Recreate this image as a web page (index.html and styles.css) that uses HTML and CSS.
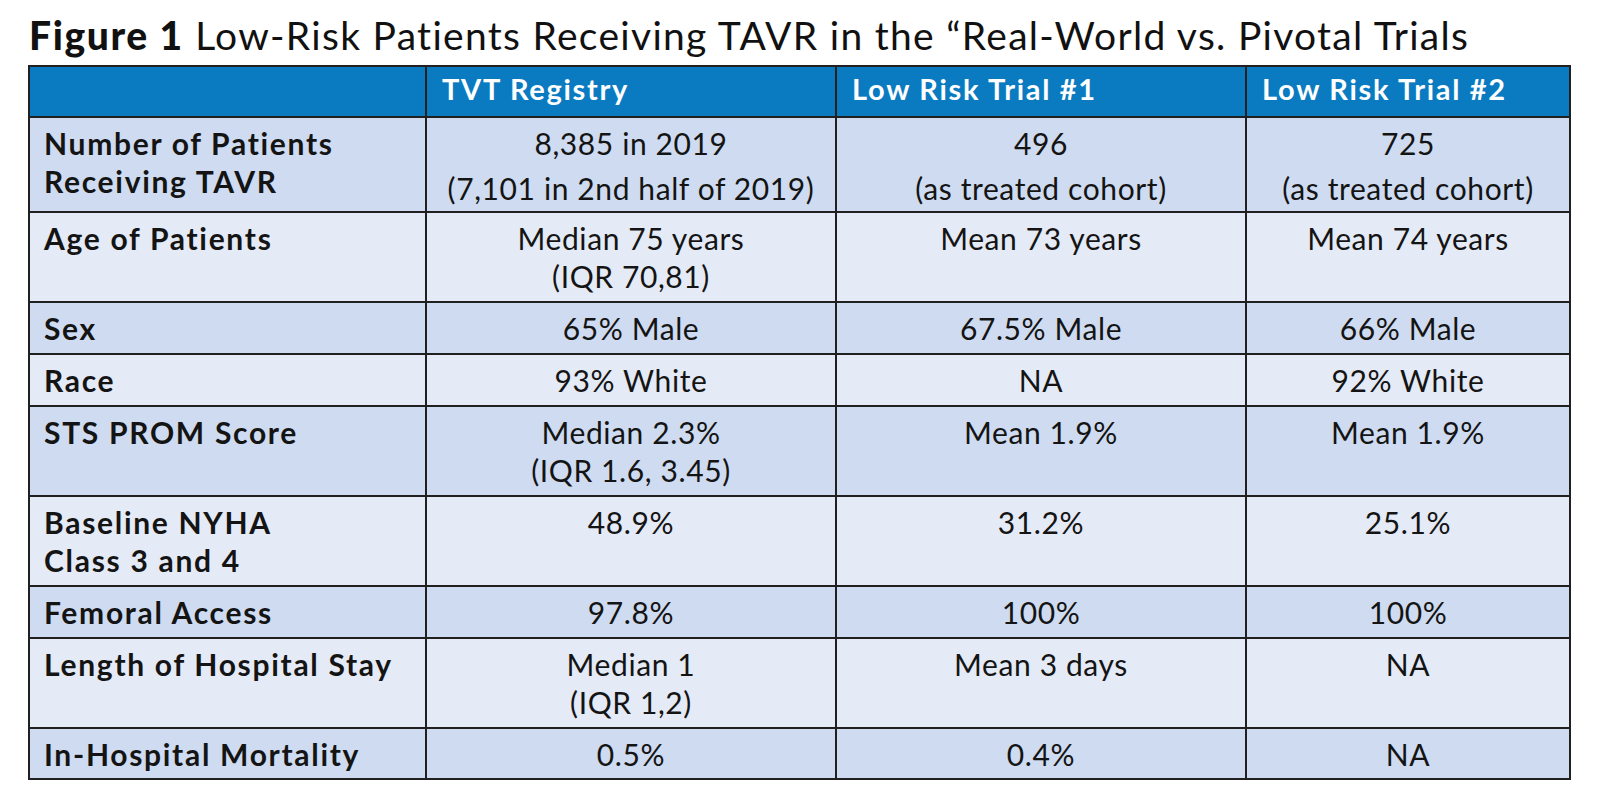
FILE: index.html
```html
<!DOCTYPE html>
<html lang="en">
<head>
<meta charset="utf-8">
<title>Figure 1</title>
<link rel="stylesheet" href="styles.css">
</head>
<body>
<div class="page">
  <h1 class="title"><span class="fig">Figure 1</span> Low-Risk Patients Receiving TAVR in the “Real-World vs. Pivotal Trials</h1>
  <table class="grid">
    <colgroup>
      <col class="c-label">
      <col class="c-tvt">
      <col class="c-t1">
      <col class="c-t2">
    </colgroup>
    <thead>
      <tr class="head">
        <th></th>
        <th>TVT Registry</th>
        <th>Low Risk Trial #1</th>
        <th>Low Risk Trial #2</th>
      </tr>
    </thead>
    <tbody>
      <tr class="dark first">
        <th>Number of Patients<br>Receiving TAVR</th>
        <td><span class="l1">8,385 in 2019</span><span class="l2">(7,101 in 2nd half of 2019)</span></td>
        <td><span class="l1">496</span><span class="l2">(as treated cohort)</span></td>
        <td><span class="l1">725</span><span class="l2">(as treated cohort)</span></td>
      </tr>
      <tr class="light">
        <th>Age of Patients</th>
        <td>Median 75 years<br>(IQR 70,81)</td>
        <td>Mean 73 years</td>
        <td>Mean 74 years</td>
      </tr>
      <tr class="dark">
        <th>Sex</th>
        <td>65% Male</td>
        <td>67.5% Male</td>
        <td>66% Male</td>
      </tr>
      <tr class="light">
        <th>Race</th>
        <td>93% White</td>
        <td>NA</td>
        <td>92% White</td>
      </tr>
      <tr class="dark">
        <th>STS PROM Score</th>
        <td>Median 2.3%<br>(IQR 1.6, 3.45)</td>
        <td>Mean 1.9%</td>
        <td>Mean 1.9%</td>
      </tr>
      <tr class="light">
        <th>Baseline NYHA<br>Class 3 and 4</th>
        <td>48.9%</td>
        <td>31.2%</td>
        <td>25.1%</td>
      </tr>
      <tr class="dark">
        <th>Femoral Access</th>
        <td>97.8%</td>
        <td>100%</td>
        <td>100%</td>
      </tr>
      <tr class="light">
        <th>Length of Hospital Stay</th>
        <td>Median 1<br>(IQR 1,2)</td>
        <td>Mean 3 days</td>
        <td>NA</td>
      </tr>
      <tr class="dark last">
        <th>In-Hospital Mortality</th>
        <td>0.5%</td>
        <td>0.4%</td>
        <td>NA</td>
      </tr>
    </tbody>
  </table>
</div>
</body>
</html>
```

FILE: styles.css
```css
html, body {
  margin: 0;
  padding: 0;
  background: #ffffff;
}

.page {
  padding: 11px 0 0 28px;
  font-family: Lato, "Noto Sans", "DejaVu Sans", sans-serif;
  color: #141414;
}

.title {
  margin: 0 0 6px 1px;
  font-size: 39px;
  line-height: 48px;
  font-weight: 400;
  letter-spacing: 1.3px;
  color: #111111;
  white-space: nowrap;
}

.fig {
  font-weight: 900;
  letter-spacing: 1.6px;
}

.grid {
  border-collapse: collapse;
  table-layout: fixed;
  width: 1541px;
  font-size: 30px;
  line-height: 38px;
}

.c-label { width: 397px; }
.c-tvt { width: 410px; }
.c-t1 { width: 410px; }
.c-t2 { width: 324px; }

.grid th,
.grid td {
  border: 2px solid #202020;
  padding: 6px 12px 6px 14px;
  vertical-align: top;
  white-space: nowrap;
}

.grid td {
  text-align: center;
  font-weight: 400;
  letter-spacing: 0.6px;
  padding-left: 8px;
  padding-right: 8px;
}

.grid tbody th {
  text-align: left;
  font-weight: 700;
  letter-spacing: 1.7px;
}

.head th {
  background: #0a7bc1;
  color: #ffffff;
  font-size: 29px;
  font-weight: 700;
  letter-spacing: 1.7px;
  text-align: left;
  padding: 3px 12px 8px 15px;
}

.dark th,
.dark td {
  background: #cedbf0;
}

.light th,
.light td {
  background: #e4eaf6;
}

.l1,
.l2 {
  display: block;
}

.l2 {
  margin-top: 7px;
}

.first th,
.first td {
  padding-bottom: 4px;
}

.last th,
.last td {
  padding-bottom: 5px;
}
```
